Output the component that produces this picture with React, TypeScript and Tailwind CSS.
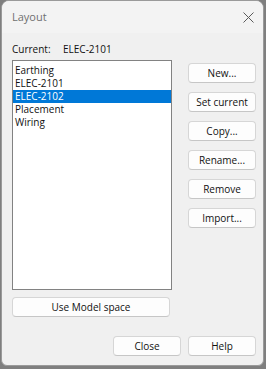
import React from "react";

const items = ["Earthing", "ELEC-2101", "ELEC-2102", "Placement", "Wiring"];
const actions = ["New...", "Set current", "Copy...", "Rename...", "Remove", "Import..."];

function Btn({ label, className = "" }: { label: string; className?: string }) {
  return (
    <button
      className={
        "flex h-[20px] items-center justify-center rounded-[4px] border border-[#d6d6d6] border-b-[#c6c6c6] bg-[#fdfdfd] text-[10px] leading-[12px] text-[#111] " +
        className
      }
    >
      {label}
    </button>
  );
}

export default function App() {
  const selected = "ELEC-2102";

  return (
    <div
      className="h-[369px] w-[266px] overflow-hidden bg-[#7f7f7f]"
      style={{ fontFamily: '"Segoe UI", "Open Sans", "Noto Sans", sans-serif' }}
    >
      <div className="ml-[1px] flex h-[366px] w-[263px] flex-col overflow-hidden rounded-t-[8px] rounded-b-[6px] border border-[#9a9a9a] bg-[#f0f0f0]">
        {/* title bar */}
        <div className="flex h-[32px] shrink-0 items-center justify-between bg-[#f3f3f3] pl-[10px] pr-[7px]">
          <span className="text-[11px] text-[#707070]">Layout</span>
          <svg width="11" height="11" viewBox="0 0 11 11" className="mr-[2px]">
            <path d="M0.5 0.5 L10.5 10.5 M10.5 0.5 L0.5 10.5" stroke="#5a5a5a" strokeWidth="1" />
          </svg>
        </div>

        <div className="flex flex-1 flex-col pl-[10px] pr-[7px]">
          <div className="mt-[9px] flex h-[14px] items-center text-[10px] text-[#111]">
            <span className="w-[51px]">Current:</span>
            <span>ELEC-2101</span>
          </div>

          <div className="mt-[4px] flex">
            <div className="flex w-[160px] flex-col">
              <div className="h-[230px] border border-[#828282] bg-white pt-[3px]">
                {items.map((it) => (
                  <div
                    key={it}
                    className={
                      "h-[13px] pl-[2px] text-[10px] leading-[13px] " +
                      (it === selected ? "bg-[#0078d7] text-white" : "text-[#111]")
                    }
                  >
                    {it}
                  </div>
                ))}
              </div>
              <Btn label="Use Model space" className="mt-[7px] w-[158px]" />
            </div>

            <div className="ml-[16px] mt-[3px] flex w-[68px] flex-col gap-[9px]">
              {actions.map((a) => (
                <Btn key={a} label={a} className="w-[68px]" />
              ))}
            </div>
          </div>

          <div className="mt-[19px] flex justify-end gap-[7px]">
            <Btn label="Close" className="w-[68px]" />
            <Btn label="Help" className="w-[68px]" />
          </div>
        </div>
      </div>
    </div>
  );
}
